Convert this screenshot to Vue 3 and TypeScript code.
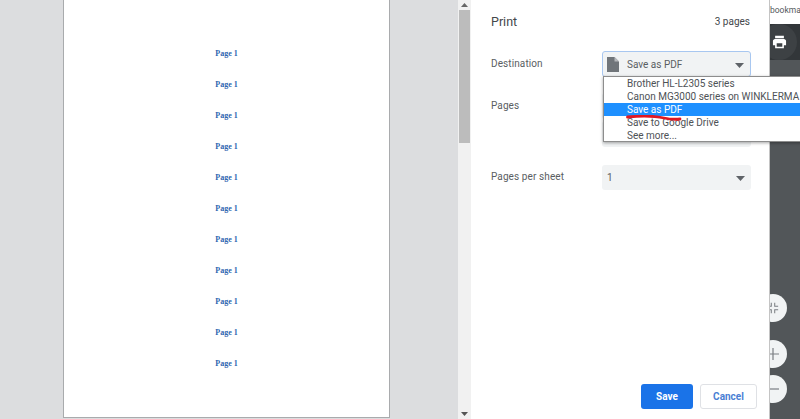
<script setup lang="ts">
const lines: number[] = Array.from({ length: 11 }, (_, i) => i)
const destinations: string[] = [
  'Brother HL-L2305 series',
  'Canon MG3000 series on WINKLERMA',
  'Save as PDF',
  'Save to Google Drive',
  'See more...',
]
</script>

<template>
  <div class="screen">
    <section class="preview">
      <div class="sheet">
        <div v-for="n in lines" :key="n" class="sheet-line">Page 1</div>
      </div>
    </section>

    <div class="scrollbar">
      <svg class="arrow" width="7" height="4" viewBox="0 0 7 4"><path d="M3.5 0 7 4H0z" fill="#666" /></svg>
      <div class="thumb"></div>
      <div class="track"></div>
      <svg class="arrow" width="7" height="4" viewBox="0 0 7 4"><path d="M0 0h7L3.5 4z" fill="#555" /></svg>
    </div>

    <aside class="panel">
      <header class="panel-head">
        <h1>Print</h1>
        <span class="count">3 pages</span>
      </header>

      <div class="row row-dest">
        <span class="label">Destination</span>
        <div class="select focused">
          <svg class="doc" width="12" height="15" viewBox="0 0 12 15"><path d="M0 0h7.500L12 4.500V15H0z" fill="#70757a" /><path d="M7.500 0v4.500H12z" fill="#b5b8bb" /></svg>
          <span>Save as PDF</span>
          <svg class="caret" width="9" height="5" viewBox="0 0 9 5"><path d="M0 0h9L4.500 5z" fill="#5f6368" /></svg>
        </div>
        <ul class="menu">
          <li v-for="d in destinations" :key="d" :class="{ active: d === 'Save as PDF' }">{{ d }}</li>
        </ul>
        <svg class="scribble" width="56" height="7" viewBox="0 0 56 7">
          <path d="M1.500 2C14 .8 30 1.200 38 3 44 4.300 49 4.500 54 4" fill="none" stroke="#e01822" stroke-width="2.800" stroke-linecap="round" />
        </svg>
      </div>

      <div class="row row-pages">
        <span class="label">Pages</span>
        <div class="select-stack">
          <div class="select plain"></div>
          <div class="select plain"></div>
        </div>
      </div>

      <div class="row row-sheet">
        <span class="label">Pages per sheet</span>
        <div class="select plain">
          <span>1</span>
          <svg class="caret" width="9" height="5" viewBox="0 0 9 5"><path d="M0 0h9L4.500 5z" fill="#5f6368" /></svg>
        </div>
      </div>

      <footer class="actions">
        <button class="btn primary">Save</button>
        <button class="btn ghost">Cancel</button>
      </footer>
    </aside>

    <section class="viewer">
      <div class="tab-strip">bookma</div>
      <div class="toolbar">
        <div class="print-btn">
          <svg width="15" height="14" viewBox="0 0 24 22"><path d="M19 6H5C3 6 1.500 7.500 1.500 9.500V16H5v5h14v-5h3.500V9.500C22.500 7.500 21 6 19 6zM16.500 18.500h-9V13h9zM19 1H5v4h14z" fill="#fff" /></svg>
        </div>
      </div>
      <div class="stage">
        <button class="round fit">
          <svg width="12" height="12" viewBox="0 0 14 14"><path d="M5 1v4H1M9 1v4h4M5 13V9H1M9 13V9h4" fill="none" stroke="#7a7e82" stroke-width="1.200" /></svg>
        </button>
        <button class="round plus">
          <svg width="14" height="14" viewBox="0 0 14 14"><path d="M7 1v12M1 7h12" stroke="#7a7e82" stroke-width="1.200" /></svg>
        </button>
        <button class="round minus">
          <svg width="14" height="14" viewBox="0 0 14 14"><path d="M1 7h12" stroke="#7a7e82" stroke-width="1.200" /></svg>
        </button>
      </div>
    </section>
  </div>
</template>

<style>
html, body { margin: 0; background: #dcdddf; }
</style>

<style scoped>
.screen {
  display: flex;
  width: 800px;
  height: 419px;
  overflow: hidden;
  font-family: Roboto, "Liberation Sans", sans-serif;
  color: #5f6368;
}
.preview {
  width: 458px;
  flex: none;
  background: #dcdddf;
  padding-left: 63px;
  box-sizing: border-box;
}
.sheet {
  width: 327px;
  height: 418px;
  box-sizing: border-box;
  background: #fff;
  border-left: 1px solid #a9abad;
  border-right: 1px solid #a9abad;
  border-bottom: 1px solid #a9abad;
  padding-top: 48px;
}
.sheet-line {
  height: 31px;
  text-align: center;
  font: bold 8px/12px "Liberation Serif", serif;
  color: #2f66b0;
}
.scrollbar {
  width: 13px;
  flex: none;
  background: #f1f1f1;
  display: flex;
  flex-direction: column;
  align-items: center;
}
.arrow { flex: none; margin: 3px 0; }
.thumb { width: 11px; height: 133px; background: #bcbcbc; }
.track { flex: 1; }
.panel {
  width: 298px;
  flex: none;
  box-sizing: border-box;
  background: #fff;
  padding: 0 19px 0 20px;
  display: flex;
  flex-direction: column;
  position: relative;
}
.panel-head {
  height: 42px;
  display: flex;
  justify-content: space-between;
  align-items: center;
}
.panel-head h1 {
  margin: 0;
  font-size: 12.500px;
  font-weight: 400;
  color: #44474b;
}
.count { font-size: 10px; color: #44474b; }
.row {
  display: grid;
  grid-template-columns: 111px 149px;
  align-items: start;
  position: relative;
}
.label { font-size: 10px; line-height: 14px; letter-spacing: .1px; color: #5a5e62; }
.row-dest { margin-top: 9px; }
.row-dest .label { padding-top: 6px; }
.select {
  height: 26px;
  box-sizing: border-box;
  background: #f1f3f4;
  border-radius: 3px;
  display: flex;
  align-items: center;
  font-size: 10px;
  padding-left: 5px;
  color: #5a5e62;
  position: relative;
}
.select .caret { position: absolute; right: 6px; top: 11px; }
.focused {
  border: 1px solid #a8c7f0;
  padding-left: 4px;
  gap: 8px;
}
.menu {
  position: absolute;
  left: 112px;
  top: 25px;
  width: 240px;
  height: 66px;
  box-sizing: border-box;
  margin: 0;
  padding: 0;
  list-style: none;
  background: #fff;
  border: 1px solid #8d8d8d;
  box-shadow: 0 1px 3px rgba(0, 0, 0, .35);
  z-index: 2;
}
.menu li {
  height: 13px;
  line-height: 13px;
  padding-left: 23px;
  font-size: 10px;
  color: #4e5256;
  white-space: nowrap;
}
.menu li.active { background: #1e90ff; color: #fff; }
.scribble { position: absolute; left: 135px; top: 64px; z-index: 3; }
.row-pages { margin-top: 16px; }
.row-pages .label { padding-top: 6px; }
.select-stack { display: flex; flex-direction: column; gap: 2px; }
.row-sheet { margin-top: 18px; }
.row-sheet .select { height: 25px; }
.row-sheet .label { padding-top: 5px; }
.actions {
  position: absolute;
  left: 170px;
  top: 384px;
  display: flex;
  gap: 7px;
}
.btn {
  height: 25px;
  border-radius: 3px;
  font-family: inherit;
  font-size: 10px;
  font-weight: 700;
  padding: 0;
  box-sizing: border-box;
}
.primary { width: 52px; background: #1a73e8; color: #fff; border: 0; }
.ghost { width: 57px; background: #fff; color: #4a7fd4; border: 1px solid #dfe1e5; }
.viewer {
  width: 31px;
  flex: none;
  display: flex;
  flex-direction: column;
  background: #525659;
  border-left: 1px solid #c4c4c4;
  box-sizing: border-box;
  overflow: hidden;
}
.tab-strip {
  height: 24px;
  background: #fff;
  font-size: 8.500px;
  line-height: 20px;
  color: #55595d;
  white-space: nowrap;
  flex: none;
}
.toolbar {
  height: 36px;
  flex: none;
  background: #323639;
  position: relative;
}
.print-btn {
  position: absolute;
  left: -9px;
  top: 0;
  width: 36px;
  height: 36px;
  border-radius: 50%;
  background: #3d4144;
  display: flex;
  align-items: center;
  justify-content: center;
}
.stage { flex: 1; position: relative; }
.round {
  position: absolute;
  left: -11px;
  width: 28px;
  height: 28px;
  padding: 0;
  border: 0;
  border-radius: 50%;
  background: #f1f3f4;
  display: flex;
  align-items: center;
  justify-content: center;
}
.fit { top: 234px; }
.plus { top: 280px; }
.minus { top: 315px; }
</style>
